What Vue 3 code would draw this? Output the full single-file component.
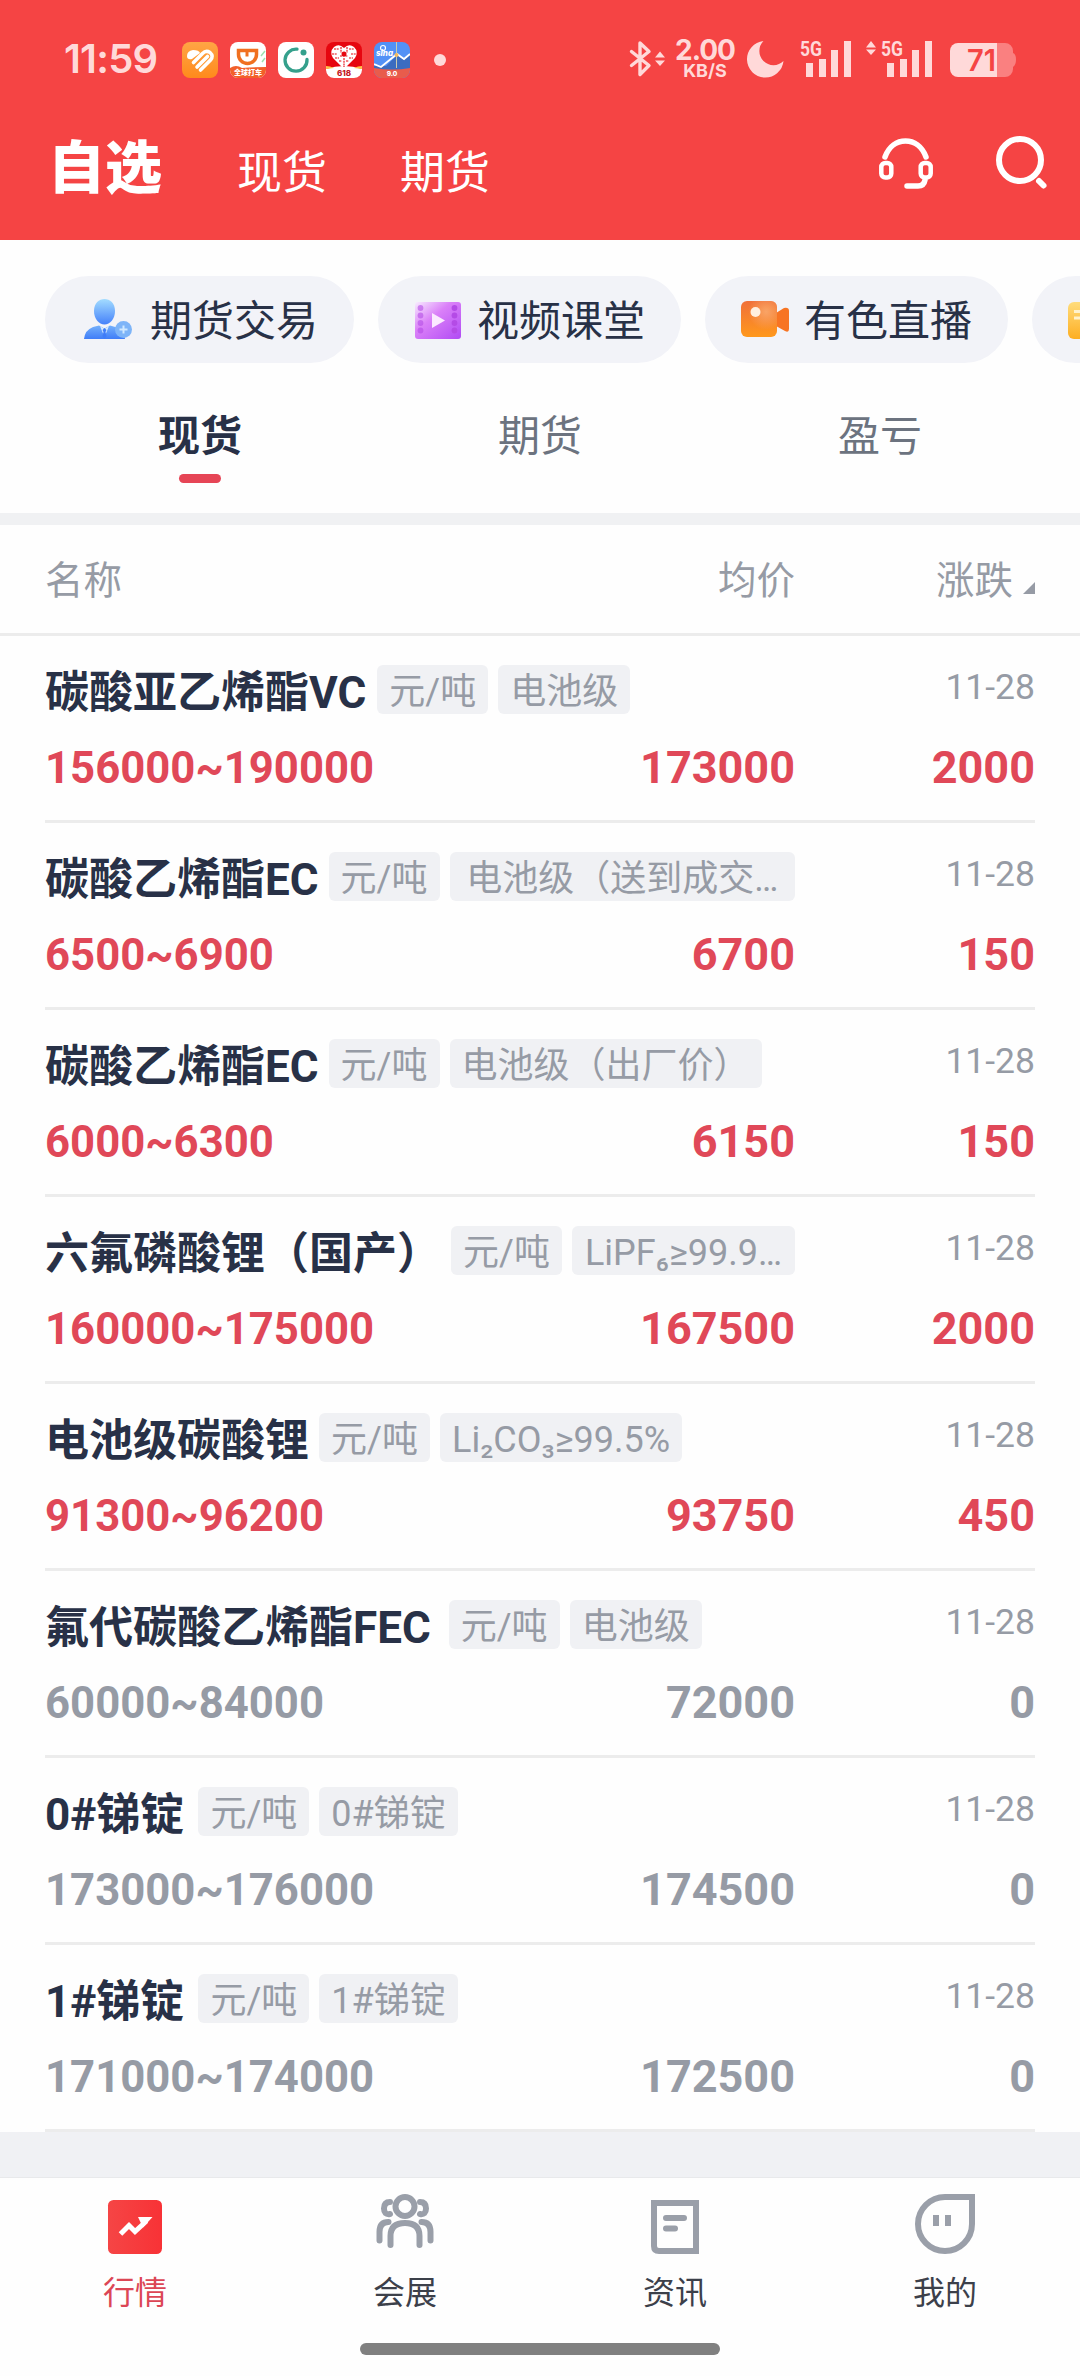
<script setup>
import { ref } from 'vue'

const channels = ['自选', '现货', '期货']
const channel = ref(0)

const chips = [
  { icon: 'trade', label: '期货交易' },
  { icon: 'video', label: '视频课堂' },
  { icon: 'live', label: '有色直播' },
  { icon: 'note', label: '' },
]

const tabs = ['现货', '期货', '盈亏']
const tab = ref(0)

const rows = [
  { name: '碳酸亚乙烯酯VC', tags: ['元/吨', '电池级'], gap: 11, date: '11-28', range: '156000~190000', avg: '173000', diff: 2000 },
  { name: '碳酸乙烯酯EC', tags: ['元/吨', '电池级（送到成交…'], gap: 10, fill: true, date: '11-28', range: '6500~6900', avg: '6700', diff: 150 },
  { name: '碳酸乙烯酯EC', tags: ['元/吨', '电池级（出厂价）'], gap: 10, date: '11-28', range: '6000~6300', avg: '6150', diff: 150 },
  { name: '六氟磷酸锂（国产）', tags: ['元/吨', 'LiPF₆≥99.9…'], gap: 10, fill: true, date: '11-28', range: '160000~175000', avg: '167500', diff: 2000 },
  { name: '电池级碳酸锂', tags: ['元/吨', 'Li₂CO₃≥99.5%'], gap: 10, date: '11-28', range: '91300~96200', avg: '93750', diff: 450 },
  { name: '氟代碳酸乙烯酯FEC', tags: ['元/吨', '电池级'], gap: 18, date: '11-28', range: '60000~84000', avg: '72000', diff: 0 },
  { name: '0#锑锭', tags: ['元/吨', '0#锑锭'], gap: 14, date: '11-28', range: '173000~176000', avg: '174500', diff: 0 },
  { name: '1#锑锭', tags: ['元/吨', '1#锑锭'], gap: 14, date: '11-28', range: '171000~174000', avg: '172500', diff: 0 },
]

const navs = [
  { icon: 'market', label: '行情' },
  { icon: 'expo', label: '会展' },
  { icon: 'news', label: '资讯' },
  { icon: 'mine', label: '我的' },
]
const nav = ref(0)
</script>

<template>
  <div class="app">
    <header class="top">
      <!-- Status bar -->
      <div class="status">
        <span class="clock">11:59</span>
        <div class="notices">
          <svg width="36" height="36" viewBox="0 0 36 36">
            <defs>
              <linearGradient id="ga" x1="0" y1="0" x2="0" y2="1">
                <stop offset="0" stop-color="#ffa545" /><stop offset="1" stop-color="#ff8a1c" />
              </linearGradient>
            </defs>
            <rect width="36" height="36" rx="8" fill="url(#ga)" />
            <path d="M5 14q0-5 6-6 6 0 7 3l-8 6q-5 1-5-3z" fill="#fff" />
            <path d="M11.500 20.500 20.500 11.500Q24 8 28 10.500 32 14 28.500 18L18.500 28M15 25 25.500 14.500" fill="none" stroke="#fff" stroke-width="3.600" stroke-linecap="round" />
          </svg>
          <svg width="36" height="36" viewBox="0 0 36 36">
            <rect width="36" height="36" rx="8" fill="#fff" />
            <path d="M0 26q6-4 12 0 12-1 24-1v3a8 8 0 0 1-8 8H8a8 8 0 0 1-8-8z" fill="#f2602a" />
            <path d="M8.500 8.500h18v4a9 9 0 0 1-18 0z" fill="none" stroke="#f07020" stroke-width="3.500" />
            <path d="M17 8v6.500" stroke="#f07020" stroke-width="3" />
            <path d="m31 14 4-5M32 20l3-4" stroke="#9ee0b0" stroke-width="1.500" />
            <text x="18" y="32.500" class="micro" font-size="7">全球打车</text>
          </svg>
          <svg width="36" height="36" viewBox="0 0 36 36">
            <rect width="36" height="36" rx="8" fill="#fff" />
            <path d="M19 7.200A11 11 0 1 0 29 17.500" fill="none" stroke="#34a08c" stroke-width="3.300" stroke-linecap="round" />
            <circle cx="25.500" cy="10.500" r="3" fill="#34a08c" />
          </svg>
          <svg width="36" height="36" viewBox="0 0 36 36">
            <rect width="36" height="36" rx="8" fill="#e6060f" />
            <path d="M0 27q18-6 36 0v1a8 8 0 0 1-8 8H8a8 8 0 0 1-8-8z" fill="#fff" />
            <path d="M0 24q4 0 8 2l-8 1zM36 24q-4 0-8 2l8 1z" fill="#ffc24a" />
            <path d="M18 6q5-5 10-1 5 5 1 11L18 27 7 16Q3 10 8 5q5-4 10 1z" fill="#fff" />
            <path d="M8 7h5M23 7h5M6 12h5M25 12h5M9 16h4M23 16h4M13 19h3M20 19h3M15 5v6M21 5v6M18 16v9M14 14h8" stroke="#e6060f" stroke-width="1.100" stroke-dasharray="2 .7" />
            <circle cx="18" cy="12" r="2.500" fill="#e6060f" />
            <text x="18" y="34" class="micro red" font-size="8">618</text>
          </svg>
          <svg width="36" height="36" viewBox="0 0 36 36">
            <rect width="36" height="36" rx="8" fill="#5291f6" />
            <path d="M0 24 12 24 23 13l7 5 6-6v16H0z" fill="#3b6cc0" />
            <path d="m0 22 7 3L23 12l7 5 6-5" fill="none" stroke="#fff" stroke-width="1.800" />
            <path d="M22.500 0v26" stroke="#c9cbb0" stroke-width="1" />
            <circle cx="22.500" cy="13" r="2" fill="#f0b860" />
            <path d="M0 26q18 3 36 0v2a8 8 0 0 1-8 8H8a8 8 0 0 1-8-8z" fill="#e85c4c" />
            <circle cx="9" cy="6" r="2.500" fill="none" stroke="#fff" stroke-width="1.200" />
            <text x="10.500" y="13.500" class="micro slant" font-size="8">sina</text>
            <text x="18" y="34" class="micro" font-size="6.500">9.0</text>
          </svg>
        </div>
        <i class="more-dot"></i>

        <div class="status-right">
          <svg class="bt" width="38" height="38" viewBox="0 0 38 38">
            <path d="M2.500 11.500 20 25.500 11 34.500V3l9 8.500L2.500 25.500" fill="none" stroke="#ffd9d9" stroke-width="3.400" stroke-linejoin="round" stroke-linecap="round" />
            <path d="m31 11.500 5 6H26zM31 26l5-5.500H26z" fill="#ffd9d9" />
          </svg>
          <div class="speed"><b>2.00</b><small>KB/S</small></div>
          <svg class="moon" width="38" height="38" viewBox="0 0 38 38">
            <path d="M17.500 1A18.300 18.300 0 1 0 37.500 21 14 14 0 0 1 17.500 1z" fill="#ffd9d9" />
          </svg>
          <svg class="sig" width="52" height="38" viewBox="0 0 52 38">
            <text x="0" y="16" class="g5" textLength="22" lengthAdjust="spacingAndGlyphs">5G</text>
            <path d="M6 23h7v14H6zM19 19h7v18h-7zM31 10h7v27h-7zM44 1h7v36h-7z" fill="#ffd9d9" />
          </svg>
          <svg class="sig2" width="67" height="38" viewBox="0 0 67 38">
            <path d="m5 1 5 6.500H0zM5 15l5-5.500H0z" fill="#ffd9d9" />
            <text x="15" y="16" class="g5" textLength="22" lengthAdjust="spacingAndGlyphs">5G</text>
            <path d="M21 23h7v14h-7zM34 19h7v18h-7zM46 10h7v27h-7zM59 1h7v36h-7z" fill="#ffd9d9" />
          </svg>
          <svg class="bat" width="67" height="36" viewBox="0 0 67 36">
            <path d="M47 1h8a8 8 0 0 1 8 8v2q3 1 3 6.500T63 25v2a8 8 0 0 1-8 8h-8z" fill="#fa8080" />
            <path d="M8 1h39v34H8a8 8 0 0 1-8-8V9a8 8 0 0 1 8-8z" fill="#ffd9d9" />
            <text x="17" y="29" class="pct" textLength="29" lengthAdjust="spacingAndGlyphs">71</text>
          </svg>
        </div>
      </div>

      <!-- Channel switch -->
      <div class="channels">
        <span
          v-for="(c, i) in channels"
          :key="i"
          class="channel"
          :class="{ on: channel === i }"
          @click="channel = i"
        >{{ c }}</span>
        <svg class="headset" width="54" height="54" viewBox="0 0 54 54" fill="none" stroke="#fff" stroke-width="5.500" stroke-linecap="round">
          <path d="M6 19C10 8 18 3 26.500 3S43 8 47 19" />
          <rect x="2.300" y="25" width="10" height="14.500" rx="4" stroke-width="4.500" />
          <rect x="41.700" y="25" width="10" height="14.500" rx="4" stroke-width="4.500" />
          <path d="M46 42q-1 6-7 6H28" />
        </svg>
        <svg class="search" width="52" height="56" viewBox="0 0 52 56" fill="none" stroke="#fff">
          <circle cx="24" cy="25" r="21" stroke-width="6" />
          <path d="m43 46 4.500 4.500" stroke-width="6" stroke-linecap="round" />
        </svg>
      </div>
    </header>

    <!-- Shortcuts -->
    <div class="chips">
      <div v-for="chip in chips" :key="chip.icon" class="chip">
        <svg v-if="chip.icon === 'trade'" width="54" height="48" viewBox="0 0 54 48">
          <defs>
            <linearGradient id="gb" x1="0" y1="0" x2="0" y2="1">
              <stop offset="0" stop-color="#a3dcff" /><stop offset="1" stop-color="#4581fa" />
            </linearGradient>
            <linearGradient id="gc" x1="0" y1="0" x2="0" y2="1">
              <stop offset="0" stop-color="#74b0fb" /><stop offset="1" stop-color="#3f7df8" />
            </linearGradient>
          </defs>
          <path d="M13 15C13 7 18 3 23.500 3S34 7 34 15 29 28.500 23.500 28.500 13 23 13 15z" fill="url(#gb)" />
          <path d="M3 43q1-9 9-12l6-1.500 5.500 3 5.500-3 7 2q7 3 8 11.500z" fill="url(#gc)" />
          <path d="m19 30 4.500 11L28 30l-4.500 3z" fill="#d8ecff" />
          <path d="m23.500 32-2 2 1 2-1 4 2 3 2-3-1-4 1-2z" fill="#3f7df8" />
          <circle cx="42.500" cy="33.500" r="8.500" fill="#7db4f8" />
          <path d="M42.500 29.500v8M38.500 33.500h8" stroke="#cfe8ff" stroke-width="2" />
        </svg>
        <svg v-else-if="chip.icon === 'video'" width="48" height="48" viewBox="0 0 48 48">
          <defs>
            <linearGradient id="gd" x1="0" y1="0" x2="1" y2="1">
              <stop offset="0" stop-color="#f8ecff" /><stop offset=".4" stop-color="#da80f8" /><stop offset="1" stop-color="#b04af4" />
            </linearGradient>
          </defs>
          <rect x="1" y="6" width="46" height="37" rx="3" fill="url(#gd)" />
          <g fill="#b44be6">
            <circle v-for="n in 4" :key="n" cx="6.500" :cy="4.500 + n * 7.500" r="2.900" opacity=".6" />
            <circle v-for="n in 4" :key="n + 4" cx="40.500" :cy="4.500 + n * 7.500" r="2.900" />
          </g>
          <path d="m18 17 13 7.500L18 32z" fill="#fbeaff" />
        </svg>
        <svg v-else-if="chip.icon === 'live'" width="48" height="48" viewBox="0 0 48 48">
          <defs>
            <linearGradient id="ge" x1="0" y1="0" x2="0" y2="1">
              <stop offset="0" stop-color="#f0703a" /><stop offset="1" stop-color="#ff981c" />
            </linearGradient>
            <radialGradient id="gf" cx=".7" cy=".3" r=".5">
              <stop offset="0" stop-color="#f9a466" /><stop offset="1" stop-color="#f9a466" stop-opacity="0" />
            </radialGradient>
          </defs>
          <path d="m35 17 8-5q5-1 5 3v18q0 4-4 2l-9-5z" fill="#f77423" />
          <rect x="0" y="5" width="36" height="36" rx="6" fill="url(#ge)" />
          <rect x="0" y="5" width="36" height="36" rx="6" fill="url(#gf)" />
          <circle cx="14.500" cy="16" r="5" fill="#fff0e0" />
        </svg>
        <svg v-else width="48" height="48" viewBox="0 0 48 48">
          <defs>
            <linearGradient id="gg" x1="0" y1="0" x2="0" y2="1">
              <stop offset="0" stop-color="#ffdc7c" /><stop offset="1" stop-color="#fdae22" />
            </linearGradient>
          </defs>
          <rect x="0" y="6" width="40" height="37" rx="6" fill="url(#gg)" />
          <path d="M6 15.500h20M6 22h20" stroke="#fff2cc" stroke-width="3" />
        </svg>
        <span v-if="chip.label">{{ chip.label }}</span>
      </div>
    </div>

    <!-- Tabs -->
    <div class="tabs">
      <div v-for="(t, i) in tabs" :key="i" class="tab" :class="{ on: tab === i }" @click="tab = i">{{ t }}</div>
    </div>

    <!-- Quotes -->
    <div class="thead">
      <span>名称</span>
      <span class="right">均价</span>
      <span class="right">涨跌<i class="sort"></i></span>
    </div>
    <div class="list">
      <div v-for="(row, i) in rows" :key="i" class="row" :class="{ up: row.diff > 0 }">
        <div class="line">
          <div class="info">
            <span class="name" :style="{ marginRight: row.gap + 'px' }">{{ row.name }}</span>
            <span class="tag unit">{{ row.tags[0] }}</span>
            <span class="tag" :class="{ fill: row.fill }">{{ row.tags[1] }}</span>
          </div>
          <span class="date">{{ row.date }}</span>
        </div>
        <div class="nums">
          <span class="range">{{ row.range }}</span>
          <span class="right">{{ row.avg }}</span>
          <span class="right">{{ row.diff }}</span>
        </div>
      </div>
    </div>
    <div class="gap"></div>

    <!-- Bottom navigation -->
    <nav class="nav">
      <div v-for="(n, i) in navs" :key="n.icon" class="nav-item" :class="{ on: nav === i }" @click="nav = i">
        <svg v-if="n.icon === 'market'" width="60" height="60" viewBox="0 0 60 60">
          <defs>
            <linearGradient id="gh" x1="0" y1="0" x2="1" y2="0">
              <stop offset="0" stop-color="#f54545" /><stop offset="1" stop-color="#f83236" />
            </linearGradient>
          </defs>
          <rect x="3" y="6" width="54" height="54" rx="5.500" fill="url(#gh)" />
          <path d="m15.500 40 8.500-8.500 6 6L41.500 27" fill="none" stroke="#fff" stroke-width="5" />
          <path d="M33 23h14.500L38 33.500z" fill="#fff" />
        </svg>
        <svg v-else-if="n.icon === 'expo'" width="60" height="60" viewBox="0 0 60 60" fill="none" stroke="#9a9fa9" stroke-width="6" stroke-linecap="round">
          <circle cx="30" cy="12.500" r="9.500" />
          <path d="M15.500 51V42q0-13 14.500-13t14.500 13v9" />
          <path d="M15 8q-6 0-6 6.500T15 20M45 8q6 0 6 6.500T45 20" />
          <path d="M4.500 46.500V38q0-10 9-10M55.500 46.500V38q0-10-9-10" />
        </svg>
        <svg v-else-if="n.icon === 'news'" width="60" height="60" viewBox="0 0 60 60" fill="none" stroke="#9a9fa9" stroke-width="6">
          <path d="M9 9h42v48H14q-5 0-5-5z" />
          <path d="M21 24h18M21 34.500h9" stroke-linecap="round" />
        </svg>
        <svg v-else width="60" height="60" viewBox="0 0 60 60" fill="none" stroke="#9a9fa9" stroke-width="6">
          <path d="M30 3h27v27A27 27 0 1 1 30 3z" />
          <path d="M21 21v11M33 21v11" />
        </svg>
        <span>{{ n.label }}</span>
      </div>
    </nav>
    <div class="home"><i></i></div>
  </div>
</template>

<style>
body {
  background: #fefefe;
}
</style>

<style scoped>
.app {
  width: 1080px;
  height: 2376px;
  display: flex;
  flex-direction: column;
  overflow: hidden;
  background: #fefefe;
  color: #283147;
  font-family: Roboto, 'Noto Sans CJK SC', sans-serif;
}

/* ── Header ── */
.top {
  height: 240px;
  background: #f54444;
  color: #fff;
}

.status {
  height: 80px;
  padding: 40px 63px 0 64px;
  box-sizing: border-box;
  display: flex;
  align-items: flex-start;
  color: #ffd9d9;
  font-family: Inter, sans-serif;
}

.clock {
  width: 118px;
  font-size: 40px;
  line-height: 38px;
  font-weight: 600;
  letter-spacing: -0.8px;
  white-space: nowrap;
}

.notices {
  display: flex;
  gap: 12px;
  padding-top: 2px;
}

.more-dot {
  width: 12px;
  height: 12px;
  margin: 14px 0 0 24px;
  border-radius: 50%;
  background: #ffd9d9;
}

.status-right {
  display: flex;
  margin-left: auto;
}

.status-right svg { overflow: visible; }

.speed {
  width: 60px;
  margin-left: 8px;
  display: flex;
  flex-direction: column;
  align-items: center;
}

.speed b {
  font-size: 28px;
  line-height: 21px;
  font-weight: 700;
  letter-spacing: -1px;
}

.speed small {
  font-size: 18px;
  line-height: 19px;
  font-weight: 700;
}

.moon { margin-left: 11px; }
.sig  { margin-left: 16px; }
.sig2 { margin-left: 14px; }
.bat  { margin: 2px 0 0 17px; }

.g5 {
  font: 700 21px Roboto, sans-serif;
  fill: #ffd9d9;
}

.pct {
  font: 600 30px Inter, sans-serif;
  fill: #f54444;
}

.micro {
  font-family: Inter, 'Noto Sans CJK SC', sans-serif;
  font-weight: 800;
  fill: #fff;
  text-anchor: middle;
}

.micro.red { fill: #c4161c; }
.micro.slant { font-style: italic; }

.channels {
  display: flex;
  align-items: flex-start;
  padding: 0 32px 0 48px;
}

.channel {
  margin-top: 61px;
  margin-right: 73px;
  font-size: 45px;
  line-height: 66px;
}

.channel.on {
  margin-top: 47px;
  margin-right: 75px;
  font-size: 57px;
  line-height: 84px;
  font-weight: 900;
}

.headset {
  margin: 58px 0 0 auto;
}

.search {
  margin: 55px 0 0 63px;
}

/* ── Shortcuts ── */
.chips {
  display: flex;
  gap: 24px;
  padding: 36px 0 0 45px;
}

.chip {
  height: 87px;
  padding: 0 36px;
  display: flex;
  flex-shrink: 0;
  align-items: center;
  gap: 15px;
  border-radius: 44px;
  background: #f2f3f8;
  font-size: 42px;
  line-height: 60px;
  white-space: nowrap;
}

.chip span { padding-top: 4px; }

/* ── Tabs ── */
.tabs {
  display: flex;
  height: 150px;
  padding: 0 30px;
  border-bottom: 12px solid #f0f1f3;
}

.tab {
  flex: 1;
  padding-top: 44px;
  display: flex;
  flex-direction: column;
  align-items: center;
  font-size: 42px;
  line-height: 60px;
  color: #6c737f;
}

.tab.on {
  font-weight: 700;
  color: #283147;
}

.tab.on::after {
  content: '';
  width: 42px;
  height: 9px;
  margin-top: 7px;
  border-radius: 5px;
  background: #e64556;
}

/* ── Table ── */
.thead {
  display: grid;
  grid-template-columns: 550px 200px 240px;
  height: 108px;
  padding: 0 45px;
  border-bottom: 3px solid #ececec;
  font-size: 38.5px;
  line-height: 111px;
  color: #969ba5;
}

.right { text-align: right; }

.sort {
  display: inline-block;
  margin-left: 10px;
  border-left: 12px solid transparent;
  border-bottom: 12px solid #969ba5;
}

.list {
  padding: 0 45px;
}

.row {
  height: 184px;
  border-bottom: 3px solid #ececec;
  color: #969ba5;
}

.line {
  display: flex;
  padding-top: 29px;
  height: 49px;
}

.info {
  display: flex;
  width: 750px;
}

.name {
  font-size: 44px;
  line-height: 56px;
  font-weight: 700;
  color: #283147;
  white-space: nowrap;
}

.tag {
  height: 49px;
  padding: 0 12px;
  margin-right: 10px;
  border-radius: 6px;
  background: #f0f1f4;
  font-size: 36px;
  line-height: 54px;
  text-align: center;
  white-space: nowrap;
}

.tag.unit {
  width: 87px;
  flex-shrink: 0;
}

.tag.fill {
  flex: 1;
  margin-right: 0;
}

.date {
  margin-left: auto;
  font-size: 35.5px;
  line-height: 44px;
}

.nums {
  display: grid;
  grid-template-columns: 550px 200px 240px;
  padding-top: 28px;
  font-size: 45px;
  line-height: 52px;
  font-weight: 700;
}

.range { font-size: 43.7px; }

.up .nums { color: #e04858; }

.gap {
  height: 45px;
  border-bottom: 1px solid #e8e9eb;
  background: #f0f1f4;
}

/* ── Bottom navigation ── */
.nav {
  display: flex;
  padding-top: 16px;
}

.nav-item {
  flex: 1;
  display: flex;
  flex-direction: column;
  align-items: center;
  font-size: 32px;
  line-height: 48px;
  color: #3c404a;
}

.nav-item span { margin-top: 15px; }
.nav-item.on { color: #dc4655; }

.home {
  display: flex;
  justify-content: center;
  padding-top: 26px;
}

.home i {
  width: 360px;
  height: 12px;
  border-radius: 6px;
  background: #808080;
}
</style>
